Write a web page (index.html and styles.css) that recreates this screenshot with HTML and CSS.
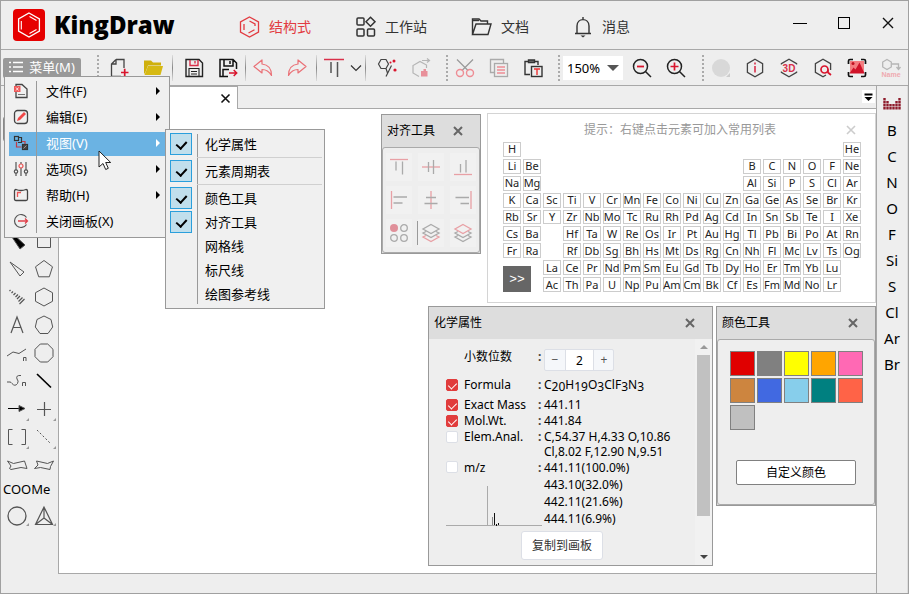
FILE: index.html
```html
<!DOCTYPE html>
<html lang="zh-CN">
<head>
<meta charset="utf-8">
<title>KingDraw</title>
<link rel="stylesheet" href="styles.css">
</head>
<body>
<header class="titlebar">
  <div class="brand">
    <svg width="32" height="32" viewBox="0 0 32 32" fill="none" stroke="#fff" stroke-width="1.300"><rect width="32" height="32" rx="4" fill="#e60000" stroke="none"/><path d="M16 4l10.400 6v12L16 28 5.600 22V10z"/><path d="M16.500 7.500l7 4M8.300 12v8.500M16.500 24.500l7-4" stroke-width="1.100"/></svg>
    <span class="brand-name">KingDraw</span>
  </div>
  <nav class="nav">
    <a href="#" class="nav-item active"><svg width="21" height="22" viewBox="0 0 21 22" fill="none" stroke="currentColor" stroke-width="1.300"><path d="M10.500 1l9 5v10l-9 5-9-5V6z"/><path d="M5 8v6M10.500 5l5.500 3v2M9.500 17l6-3.200"/></svg>结构式</a>
    <a href="#" class="nav-item"><svg width="21" height="22" viewBox="0 0 21 22" fill="none" stroke="currentColor" stroke-width="1.500"><rect x="2" y="2" width="7" height="7" rx="1"/><path d="M15.500 1.200l4.500 4.500-4.500 4.500L11 5.700z"/><rect x="2" y="13" width="7" height="7" rx="1"/><rect x="12.500" y="13" width="7" height="7" rx="1"/></svg>工作站</a>
    <a href="#" class="nav-item"><svg width="21" height="22" viewBox="0 0 21 22" fill="none" stroke="currentColor" stroke-width="1.400"><path d="M1.500 18.500V3H8l2 2h6.500v3M1.500 18.500L5 8h15l-3 10.500z"/><path d="M2 4.500h6"/></svg>文档</a>
    <a href="#" class="nav-item"><svg width="20" height="22" viewBox="0 0 20 22" fill="none" stroke="currentColor" stroke-width="1.400"><path d="M2 17.500h16M4 17.500V10c0-8.500 12-8.500 12 0v7.500M10 1v2.500"/><path d="M7.500 19.500h5l-2.500 2z" fill="currentColor" stroke="none"/></svg>消息</a>
  </nav>
  <div class="window-controls">
    <button aria-label="最小化"><svg width="14" height="14"><path d="M0 7.500h14" stroke="#000"/></svg></button>
    <button aria-label="最大化"><svg width="14" height="14"><rect x="1.500" y="1.500" width="11" height="11" fill="none" stroke="#000"/></svg></button>
    <button aria-label="关闭"><svg width="14" height="14"><path d="M2 2l10 10M12 2L2 12" stroke="#111" stroke-width="1.400"/></svg></button>
  </div>
</header>

<div class="toolbar">
  <div class="menu-root">
    <button class="menu-button"><svg width="14" height="12" viewBox="0 0 14 12" stroke="#fff" stroke-width="1.300"><path d="M0 1.500h2M4 1.500h10M0 6h2M4 6h10M0 10.500h2M4 10.500h10"/></svg>菜单(M)</button>
    <ul class="menu">
      <li class="menu-item"><svg class="mi" viewBox="0 0 16 16"><path d="M3 1.500h6l5 4.500v8.500H3z" fill="none" stroke="#444" stroke-width="1.300"/><path d="M5 11.500h7" stroke="#777"/><rect x="1" y="3" width="6.500" height="6" fill="#ee5a5a"/><path d="M3 4.500l2.500 3m0-3L3 7.500" stroke="#fff" stroke-width=".8"/></svg>文件(F)<i class="arrow"></i></li>
      <li class="menu-item"><svg class="mi" viewBox="0 0 16 16"><rect x="1.500" y="1.500" width="13" height="13" rx="3" fill="none" stroke="#444" stroke-width="1.300"/><path d="M4 12l1-3L11 3l2 2-6 6z" fill="#f04848"/></svg>编辑(E)<i class="arrow"></i></li>
      <li class="menu-item selected"><svg class="mi" viewBox="0 0 16 16" fill="none" stroke="#333" stroke-width="1.200"><rect x="1.500" y="1.500" width="4" height="4"/><path d="M6 2.500h2.500v5H5"/><path d="M3.500 7v5h5M9 6.500h3v3" stroke="#c13b45"/><rect x="9.500" y="9.500" width="5" height="5" fill="#444"/><path d="M10.500 13.500l3-3" stroke="#aaa" stroke-width=".8"/></svg>视图(V)<i class="arrow"></i>
        <ul class="submenu">
          <li><label><input type="checkbox" checked>化学属性</label></li>
          <li class="divider"></li>
          <li><label><input type="checkbox" checked>元素周期表</label></li>
          <li class="divider"></li>
          <li><label><input type="checkbox" checked>颜色工具</label></li>
          <li><label><input type="checkbox" checked>对齐工具</label></li>
          <li><label><input type="checkbox">网格线</label></li>
          <li><label><input type="checkbox">标尺线</label></li>
          <li><label><input type="checkbox">绘图参考线</label></li>
        </ul>
      </li>
      <li class="menu-item"><svg class="mi" viewBox="0 0 16 16" fill="none" stroke="#555" stroke-width="1.200"><path d="M3 1v8M3 12v3M8 1v2M8 7v8M13 1v8M13 12v3"/><circle cx="3" cy="10.500" r="1.700"/><circle cx="8" cy="5" r="2" stroke="#e55"/><circle cx="13" cy="10.500" r="1.700"/></svg>选项(S)<i class="arrow"></i></li>
      <li class="menu-item"><svg class="mi" viewBox="0 0 16 16" fill="none" stroke="#444" stroke-width="1.300"><path d="M1.500 4q0-1.500 1.500-1.500 5 2 10 0 1.500 0 1.500 1.500v8q0 1.500-1.500 1.500H3q-1.500 0-1.500-1.500z"/><path d="M4.500 10V5.500H8" stroke="#e55"/></svg>帮助(H)<i class="arrow"></i></li>
      <li class="menu-item"><svg class="mi" viewBox="0 0 16 16" fill="none" stroke="#555" stroke-width="1.200"><path d="M13.500 4.500a6.500 6.500 0 1 0 0 7"/><path d="M5 8h9.500M12 5.500L14.500 8 12 10.500" stroke="#e0404a" stroke-width="1.300"/></svg>关闭画板(X)</li>
    </ul>
  </div>
  <i class="grip"></i>
  <div class="group group-new">
    <button class="tool" aria-label="新建"><svg width="20" height="20" viewBox="0 0 20 20" fill="none" stroke="#444" stroke-width="1.300"><path d="M7 1.500h8V10M7 1.500L2.500 6v12.500H12M7 1.500V6H2.500"/><path d="M12 14.500h7.500M15.700 10.700v7.600" stroke="#d9152d" stroke-width="1.700"/></svg></button>
    <button class="tool" aria-label="打开"><svg width="21" height="20" viewBox="0 0 21 20"><path d="M1 2.500h7l2 2h8v3H5l-3 8H1z" fill="#cfb00c"/><path d="M5 8h15l-2.500 9H1.500z" fill="#d6b913"/></svg></button>
  </div>
  <i class="sep"></i>
  <div class="group">
    <button class="tool" aria-label="保存"><svg width="20" height="20" viewBox="0 0 20 20" fill="none" stroke="#222" stroke-width="1.400"><path d="M2 1.500h13l3.500 3.500v13.500h-16.500z"/><path d="M5 18v-7.500h10V18M7 13.500h6M7 16h6" stroke-width="1.100"/><path d="M6 2v5.500h8V2M11 3v2.500" stroke="#d9304a"/></svg></button>
    <button class="tool" aria-label="另存为"><svg width="20" height="20" viewBox="0 0 20 20" fill="none" stroke="#111" stroke-width="1.500"><path d="M18.500 11V5L15 1.500H2v17h8M6 2v6h9V2M12 3v3M5 18v-6.500h6"/><path d="M11 15h7.500M15.700 12l3 3-3 3" stroke="#d9152d"/></svg></button>
  </div>
  <i class="sep sep-tight"></i>
  <div class="group">
    <button class="tool" aria-label="撤销"><svg width="20" height="20" viewBox="0 0 20 20" fill="none" stroke="#ea7076" stroke-width="1.200"><path d="M1 8.500L9 2v4q9.500 1 9.500 11.500Q15 11.500 9 11.500V15z" stroke-linejoin="round"/></svg></button>
    <button class="tool" aria-label="重做"><svg width="20" height="20" viewBox="0 0 20 20" fill="none" stroke="#ea7076" stroke-width="1.200"><path d="M19 8.500L11 2v4Q1.500 7 1.500 17.500 5 11.500 11 11.500V15z" stroke-linejoin="round"/></svg></button>
  </div>
  <i class="sep sep-even"></i>
  <div class="group">
    <button class="tool tool-main" aria-label="对齐"><svg width="22" height="20" viewBox="0 0 22 20" fill="none" stroke="#555" stroke-width="1.500"><path d="M1 1.500h20" stroke="#d9304a"/><path d="M8 4v11M14.500 4v15"/></svg></button>
    <button class="tool tool-drop" aria-label="更多对齐"><svg width="12" height="8"><path d="M1 1.500l5 5 5-5" fill="none" stroke="#333" stroke-width="1.200"/></svg></button>
  </div>
  <i class="sep"></i>
  <div class="group">
    <button class="tool" aria-label="结构检查"><svg width="20" height="20" viewBox="0 0 20 20" fill="none" stroke="#444" stroke-width="1.200"><path d="M4 1.500h5l2.500 4.500L9 10.500H4L1.500 6zM9 10.500l1.500 4.500M14.500 7.500L9 18.500"/><g fill="#d9152d" stroke="none"><circle cx="17" cy="3" r="1.500"/><circle cx="13.500" cy="4.500" r="1"/><circle cx="18" cy="12" r="1.600"/></g></svg></button>
    <button class="tool" aria-label="结构优化"><svg width="20" height="20" viewBox="0 0 20 20" fill="none" stroke="#b5b5b5" stroke-width="1.200"><path d="M15.500 10V7L9 3.500 2 7.500v7.500l6 3.500M11 2.500h7.500M16 .5l2.500 2-2.500 2"/><path d="M10 18.500v-5.500h2.500V11H15v2h1.500v5.500z" fill="#e8909a" stroke="none"/></svg></button>
  </div>
  <i class="grip"></i>
  <div class="group">
    <button class="tool" aria-label="剪切"><svg width="20" height="20" viewBox="0 0 20 20" fill="none" stroke="#999" stroke-width="1.200"><path d="M2 1.500l11 11M18 1.500l-11 11"/><g stroke="#ee8d95" stroke-width="1.400"><circle cx="5" cy="15" r="3.500"/><circle cx="15" cy="15" r="3.500"/></g></svg></button>
    <button class="tool" aria-label="复制"><svg width="20" height="20" viewBox="0 0 20 20" fill="none" stroke="#aaa" stroke-width="1.300"><path d="M5 14.500H1.500v-13h13V5"/><rect x="5.500" y="5.500" width="13" height="13"/><path d="M8 9h8M8 12h8M8 15h8" stroke="#ee8d95"/></svg></button>
    <button class="tool" aria-label="粘贴"><svg width="20" height="20" viewBox="0 0 20 20" fill="none" stroke="#333" stroke-width="1.400"><path d="M7 16.500H2v-13h13V7"/><path d="M5.500 2h6v2.500h-6z" fill="#777"/><rect x="8.500" y="8.500" width="10.500" height="10"/><path d="M11 11h6M14 11v6" stroke="#e33"/></svg></button>
  </div>
  <i class="grip"></i>
  <div class="zoom"><select aria-label="缩放"><option>150%</option></select></div>
  <div class="group">
    <button class="tool" aria-label="缩小"><svg width="20" height="20" viewBox="0 0 20 20" fill="none" stroke="#222" stroke-width="1.500"><circle cx="8.500" cy="8.500" r="7"/><path d="M13.500 13.500l5.500 5.500"/><path d="M5 8.500h7" stroke="#d9152d" stroke-width="1.800"/></svg></button>
    <button class="tool" aria-label="放大"><svg width="20" height="20" viewBox="0 0 20 20" fill="none" stroke="#222" stroke-width="1.500"><circle cx="8.500" cy="8.500" r="7"/><path d="M13.500 13.500l5.500 5.500"/><path d="M4.500 8.500h8M8.500 4.500v8" stroke="#d9152d" stroke-width="1.700"/></svg></button>
  </div>
  <div class="group group-end">
    <i class="grip"></i>
    <button class="tool" aria-label="颜色"><svg width="20" height="20"><circle cx="10" cy="10" r="9" fill="#d8d8d8"/><path d="M19 15v4h-4z" fill="#ccc"/></svg></button>
    <button class="tool" aria-label="信息"><svg width="20" height="20" viewBox="0 0 20 20" fill="none" stroke="#444" stroke-width="1.300"><path d="M10 1.300l7.600 4.400v8.600L10 18.700l-7.600-4.400V5.700z"/><path d="M10 8v6.500M10 4.500v2" stroke="#d9304a" stroke-width="1.600"/></svg></button>
    <button class="tool" aria-label="三维"><svg width="20" height="20" viewBox="0 0 20 20" fill="none" stroke="#444" stroke-width="1.300"><path d="M2.400 6.500v-.8L10 1.300l7.600 4.400v.8M2.400 13.500v.8l7.600 4.400 7.600-4.400v-.8"/><text x="10" y="14" class="icon-3d" text-anchor="middle">3D</text></svg></button>
    <button class="tool" aria-label="搜索结构"><svg width="20" height="20" viewBox="0 0 20 20" fill="none" stroke="#444" stroke-width="1.300"><path d="M17.600 12V5.700L10 1.300 2.400 5.700v8.600L10 18.700l3-1.700"/><circle cx="11.500" cy="11.500" r="3.500" stroke="#d9152d" stroke-width="1.700"/><path d="M15 11.500v3l3 2.500" stroke="#d9152d" stroke-width="1.700"/></svg></button>
    <button class="tool" aria-label="图像识别"><svg width="20" height="20" viewBox="0 0 20 20"><rect x="3" y="3" width="14" height="12" fill="#f47d80"/><path d="M2.500 15.500l4-6 2 2 4-7 5 11z" fill="#d01228"/><circle cx="6" cy="5.500" r="1.500" fill="#c01020"/><path d="M1.500 6V3q0-1.500 1.500-1.500h3M14 1.500h3q1.500 0 1.500 1.500v3M18.500 14v3q0 1.500-1.500 1.500h-3M6 18.500H3q-1.500 0-1.500-1.500v-3" fill="none" stroke="#111" stroke-width="1.700"/></svg></button>
    <button class="tool" aria-label="命名"><svg width="20" height="20" viewBox="0 0 20 20" fill="none" stroke="#b5b5b5" stroke-width="1.300"><path d="M6 1.500l4.300 2.500v5L6 11.500 1.700 9V4zM11 6h6.500v4M15.500 9l2 2.500 2-2.500"/><text x="10" y="19" class="icon-name" text-anchor="middle">Name</text></svg></button>
  </div>
</div>

<main class="workspace">
  <aside class="tools">
    <button class="pick" aria-label="选择"></button>
    <div class="tool-grid">
      <button aria-label="实楔形键"><svg viewBox="0 0 20 20"><path d="M3 3l2-1 13 12-5 4z" fill="#000"/></svg></button>
      <button aria-label="四元环"><svg viewBox="0 0 20 20"><path d="M3.500 3.500h13v13h-13z"/></svg></button>
      <button aria-label="空楔形键"><svg viewBox="0 0 20 20"><path d="M3 3l14 10-4 4z"/></svg></button>
      <button aria-label="五元环"><svg viewBox="0 0 20 20"><path d="M10 1.500l8.500 6.300-3.200 10H4.700l-3.200-10z"/></svg></button>
      <button aria-label="虚楔形键"><svg viewBox="0 0 20 20"><path d="M2.500 4l1-1M4.500 6l1.500-1.500M6.500 8l2-2M8.500 10l2.500-2.500M10 12l3-3M11.500 14.500l4-4M12.500 17l5-5" stroke-width="1.200"/></svg></button>
      <button aria-label="六元环"><svg viewBox="0 0 20 20"><path d="M10 1l8.500 4.700v8.600L10 19l-8.500-4.700V5.700z"/></svg></button>
      <button aria-label="文字"><svg viewBox="0 0 20 20"><path d="M4 18l6-16 6 16M6 12.500h8" stroke-width="1.200"/></svg></button>
      <button aria-label="七元环"><svg viewBox="0 0 20 20"><path d="M10 1l7 3.500 1.700 7.500-4.700 6.500H6L1.300 12 3 4.500z"/></svg></button>
      <button aria-label="链"><svg viewBox="0 0 20 20"><path d="M0 13l6-4 6 1.500L19 6M16.500 18v-3.500h2.500V18"/></svg></button>
      <button aria-label="八元环"><svg viewBox="0 0 20 20"><path d="M6.300 1h7.400L19 6.300v7.400L13.700 19H6.300L1 13.700V6.300z"/></svg></button>
      <button aria-label="曲线"><svg viewBox="0 0 20 20"><path d="M0 11h3q1 0 2 1.500 3 3.500 5.500 0Q12 10 10 8q-1.500-4 4-3.500M15.500 15v-3.500h3V15"/></svg></button>
      <button aria-label="单键"><svg viewBox="0 0 20 20"><path d="M3 3l14 13.500" stroke="#000" stroke-width="1.700"/></svg></button>
      <button aria-label="箭头"><svg viewBox="0 0 20 20"><path d="M1 9.500h12" stroke="#000"/><path d="M12 6.500l6 3-6 3z" fill="#000"/><path class="corner" d="M22 19v3h-3z"/></svg></button>
      <button aria-label="加号"><svg viewBox="0 0 20 20"><path d="M3 10.500h14M10.500 3v14" stroke-width="1.200"/><path class="corner" d="M22 19v3h-3z"/></svg></button>
      <button aria-label="括号"><svg viewBox="0 0 20 20"><path d="M5.500 2.500h-4v15h4M14.500 2.500h4v15h-4"/><path class="corner" d="M22 19v3h-3z"/></svg></button>
      <button aria-label="虚线"><svg viewBox="0 0 20 20"><path d="M3 3l14 14" stroke-dasharray="2 2"/><path class="corner" d="M22 19v3h-3z"/></svg></button>
      <button aria-label="船式"><svg viewBox="0 0 20 20"><path d="M.5 6l6 2.500 11-2.500 2.500 7.500-6-1L4 14.500l-1.500-1L4 11z"/></svg></button>
      <button aria-label="椅式"><svg viewBox="0 0 20 20"><path d="M19.500 6l-6 2.500-11-2.500L4 10 .5 13.500l6-1 9.500 2 .5-3z"/></svg></button>
    </div>
    <button class="label-tool">COOMe</button>
    <div class="tool-grid">
      <button aria-label="圆"><svg viewBox="0 0 20 20"><circle cx="10" cy="10" r="9" stroke-width="1.300"/><path class="corner" d="M22 17v3h-3z"/></svg></button>
      <button aria-label="四面体"><svg viewBox="0 0 20 20"><path d="M10 1L1.500 18.500h17zM10 1v11L1.500 18.500M10 12l8.500 6.500" stroke-width="1.200"/><path class="corner" d="M22 17v3h-3z"/></svg></button>
    </div>
  </aside>

  <section class="document">
    <div class="tabs">
      <div class="tab"><button aria-label="关闭标签"><svg width="9" height="9"><path d="M.5.5l8 8M8.500.5l-8 8" stroke="#111" stroke-width="1.600"/></svg></button></div>
      <button class="tab-list" aria-label="标签列表"><svg width="13" height="13"><path d="M2.500 4.500h8" stroke="#000" stroke-width="2"/><path d="M2.500 7h8l-4 4z"/></svg></button>
    </div>
    <div class="canvas">
      <section class="panel align-panel">
        <header class="panel-head">对齐工具<button aria-label="关闭"><svg width="10" height="10"><path d="M1 1l8 8M9 1L1 9"/></svg></button></header>
        <div class="panel-body align-grid">
          <button aria-label="顶对齐"><svg viewBox="0 0 20 20"><path class="r" d="M1 2.500h18"/><path d="M7 4.500v9M13.500 4.500v13"/></svg></button>
          <button aria-label="垂直居中"><svg viewBox="0 0 20 20"><path class="r" d="M1 10h18"/><path d="M7.500 5v10M12.500 3v14"/></svg></button>
          <button aria-label="底对齐"><svg viewBox="0 0 20 20"><path class="r" d="M1 17.500h18"/><path d="M7.500 7v8.500M13 3v12.500"/></svg></button>
          <button aria-label="左对齐"><svg viewBox="0 0 20 20"><path class="r" d="M2.500 1v18"/><path d="M4.500 7H18M4.500 13h9"/></svg></button>
          <button aria-label="水平居中"><svg viewBox="0 0 20 20"><path class="r" d="M10 1v18"/><path d="M5 7.500h10M3.500 13.500h13"/></svg></button>
          <button aria-label="右对齐"><svg viewBox="0 0 20 20"><path class="r" d="M18 1v18"/><path d="M2.500 7.500H16M7.500 13.500H16"/></svg></button>
          <button aria-label="分组"><svg viewBox="0 0 20 20"><circle cx="5" cy="5" r="4" fill="#e0909a" stroke="none"/><circle cx="15" cy="5" r="3.300"/><circle cx="5" cy="15" r="3.300"/><circle cx="15" cy="15" r="3.300"/></svg></button>
          <button class="ruled" aria-label="置于底层"><svg viewBox="0 0 20 20"><path d="M10 1.500l8 4.500-8 4.500L2 6zM5 8.500L2 10l8 4.500 8-4.500-3-1.500"/><path class="r" d="M5 12.500L2 14l8 4.500 8-4.500-3-1.500"/></svg></button>
          <button aria-label="置于顶层"><svg viewBox="0 0 20 20"><path d="M5 8.500L2 10l8 4.500 8-4.500-3-1.500M5 12.500L2 14l8 4.500 8-4.500-3-1.500"/><path class="r" d="M10 1.500l8 4.500-8 4.500L2 6z"/></svg></button>
        </div>
      </section>

      <section class="ptable">
        <header class="ptable-head">提示：右键点击元素可加入常用列表<button aria-label="关闭"><svg width="10" height="10"><path d="M1 1l8 8M9 1L1 9" stroke="#ccc" stroke-width="1.600"/></svg></button></header>
        <div class="elements" id="elements"><button class="more">&gt;&gt;</button></div>
      </section>

      <section class="panel props-panel">
        <header class="panel-head">化学属性<button aria-label="关闭"><svg width="10" height="10"><path d="M1 1l8 8M9 1L1 9"/></svg></button></header>
        <div class="props-scroll">
          <div class="props">
            <div class="prop prop-digits"><label for="digits">小数位数</label><b>:</b>
              <div class="stepper"><button aria-label="减少">−</button><input id="digits" value="2"><button aria-label="增加">+</button></div></div>
            <div class="prop prop-formula"><input type="checkbox" id="p1" checked><label for="p1">Formula</label><b>:</b><span>C<sub>20</sub>H<sub>19</sub>O<sub>3</sub>ClF<sub>3</sub>N<sub>3</sub></span></div>
            <div class="prop"><input type="checkbox" id="p2" checked><label for="p2">Exact Mass</label><b>:</b><span>441.11</span></div>
            <div class="prop"><input type="checkbox" id="p3" checked><label for="p3">Mol.Wt.</label><b>:</b><span>441.84</span></div>
            <div class="prop prop-anal"><input type="checkbox" id="p4"><label for="p4">Elem.Anal.</label><b>:</b><span>C,54.37 H,4.33 O,10.86<br>Cl,8.02 F,12.90 N,9.51</span></div>
            <div class="prop prop-mz"><input type="checkbox" id="p5"><label for="p5">m/z</label><b>:</b><span>441.11(100.0%)<br>443.10(32.0%)<br>442.11(21.6%)<br>444.11(6.9%)</span>
              <svg class="spectrum" width="96" height="42"><path d="M0 40.500h96M41.500 1v39" stroke="#aaa" fill="none"/><path d="M46.500 32v8" stroke="#888"/><path d="M48.500 28v12M50.500 39v2M52.500 38v2" stroke="#111"/></svg></div>
            <button class="copy">复制到画板</button>
          </div>
          <div class="scrollbar"><i class="up"></i><i class="thumb"></i><i class="down"></i></div>
        </div>
      </section>

      <section class="panel color-panel">
        <header class="panel-head">颜色工具<button aria-label="关闭"><svg width="10" height="10"><path d="M1 1l8 8M9 1L1 9"/></svg></button></header>
        <div class="panel-body colors">
          <div class="swatches">
            <button class="c1" aria-label="红"></button><button class="c2" aria-label="灰"></button><button class="c3" aria-label="黄"></button><button class="c4" aria-label="橙"></button><button class="c5" aria-label="粉"></button>
            <button class="c6" aria-label="棕"></button><button class="c7" aria-label="蓝"></button><button class="c8" aria-label="天蓝"></button><button class="c9" aria-label="青"></button><button class="c10" aria-label="番茄红"></button>
            <button class="c11" aria-label="浅灰"></button>
          </div>
          <button class="custom">自定义颜色</button>
        </div>
      </section>
    </div>
    <footer class="status"></footer>
  </section>

  <aside class="atoms">
    <button aria-label="周期表"><svg width="18" height="14" viewBox="0 0 18 14"><path d="M1.500 1v12M4.500 4v9M7.500 7v6M10.500 7v6M13.500 4v9M16.500 1v12" stroke="#8e1b2b" stroke-width="2.400" stroke-dasharray="2.500 .5" fill="none"/></svg></button>
    <button>B</button><button>C</button><button>N</button><button>O</button><button>F</button><button>Si</button><button>S</button><button>Cl</button><button>Ar</button><button>Br</button>
  </aside>
</main>
<svg class="cursor" width="14" height="21" viewBox="0 0 14 21"><path d="M1 1v16l4-3.500 2.700 6 2.600-1.200L7.700 12.500h5z" fill="#fff" stroke="#222"/></svg>
<script src="script.js"></script>
</body>
</html>
```
FILE: styles.css
```css
* { box-sizing: border-box; }
body {
  margin: 0;
  height: 100vh;
  display: flex;
  flex-direction: column;
  overflow: hidden;
  border: 1px solid #a0a0a0;
  background: #eee;
  color: #111;
  font: 13px/16px "Noto Sans", "Noto Sans CJK SC", sans-serif;
}
button, input, select { font: inherit; color: inherit; margin: 0; }
button { border: 0; padding: 0; background: none; display: flex; align-items: center; justify-content: center; }
ul { list-style: none; margin: 0; padding: 0; }
svg { display: block; flex: none; overflow: visible; }

/* title bar */
.titlebar { display: flex; align-items: center; height: 49px; padding-left: 12px; border-bottom: 1px solid #a8a8a8; }
.brand { display: flex; align-items: center; gap: 9px; width: 226px; }
.brand-name { font: 800 24px/32px "Open Sans", sans-serif; color: #000; }
.nav { display: flex; gap: 44px; flex: 1; padding-top: 3px; }
.nav-item { display: flex; align-items: center; gap: 9px; color: #333; font-size: 14px; text-decoration: none; }
.nav-item.active { color: #e23b41; }
.window-controls { display: flex; gap: 4px; align-self: flex-start; }
.window-controls button { width: 40px; height: 44px; }

/* toolbar */
.toolbar { display: flex; align-items: center; height: 36px; padding-left: 2px; border-bottom: 1px solid #a8a8a8; }
.menu-root { position: relative; margin-right: 8px; }
.menu-button { gap: 6px; width: 78px; height: 20px; padding-bottom: 2px; background: #999; color: #fff; border-radius: 2px; }
.group { display: flex; }
.group-end { margin-left: auto; align-items: center; }
.tool { width: 34px; height: 34px; }
.tool-main { width: 30px; }
.tool-drop { width: 14px; }
.sep { width: 1px; height: 26px; margin: 0 4px 0 2px; background: linear-gradient(#ddd, #888, #ddd); }
.sep-tight { margin: 0; }
.sep-even { margin: 0 2px; }
.grip { width: 2px; height: 26px; margin-left: 8px; background: repeating-linear-gradient(#aaa 0 2px, transparent 2px 4px); }
.group-new { margin-left: 3px; }
.icon-3d { font: 700 10px "Liberation Sans", sans-serif; fill: #d9304a; stroke: none; }
.icon-name { font: 700 7px "Liberation Sans", sans-serif; fill: #eeaab0; stroke: none; }
.zoom { position: relative; margin: 0 2px 0 3px; }
.zoom select { appearance: none; width: 60px; height: 24px; padding: 0 4px; border: 0; border-radius: 0; background: #fff; color: #000; }
.zoom::after { content: ""; position: absolute; right: 4px; top: 9px; border: 6px solid transparent; border-top-color: #555; border-bottom: 0; pointer-events: none; }

/* menus */
.menu { position: absolute; z-index: 10; left: 1px; top: 18px; width: 166px; padding: 3px 4px; display: flex; flex-direction: column; gap: 2px; border: 1px solid #999; background: linear-gradient(#999, #999) 31px 4px / 1px 152px no-repeat #f0f0f0; }
.menu-item { position: relative; display: flex; align-items: center; height: 24px; padding-left: 4px; padding-bottom: 1px; color: #000; }
.menu-item.selected { background: linear-gradient(#999, #999) 27px 0 / 1px 24px no-repeat #6bb3e3; color: #fff; }
.mi { width: 16px; height: 16px; margin-right: 17px; }
.arrow { margin-left: auto; margin-right: 5px; border: 4px solid transparent; border-left-color: currentColor; border-right: 0; }
.submenu { position: absolute; left: 156px; top: -3px; width: 160px; padding: 2px; border: 1px solid #999; background: linear-gradient(#999, #999) 31px 4px / 1px 170px no-repeat #f0f0f0; color: #000; }
.submenu label { display: flex; align-items: center; gap: 13px; height: 24px; padding-left: 2px; }
.submenu input { appearance: none; width: 22px; height: 22px; display: grid; place-items: center; }
.submenu input:checked { border: 1px solid #2a9fdc; background: #c1dfec; }
.submenu input:checked::after { content: ""; width: 5px; height: 8px; border: solid #000; border-width: 0 2px 2px 0; transform: rotate(42deg); }
.divider { height: 1px; margin: 1px 0 1px 29px; background: #d0d0d0; }
.cursor { position: absolute; z-index: 20; left: 98px; top: 150px; }

/* workspace */
.workspace { flex: 1; min-height: 0; display: grid; grid-template-columns: 57px 1fr 32px; }
.tools { padding: 30px 1px 0 2px; }
.pick { width: 27px; height: 26px; margin-bottom: 85px; border: 1px solid #888; border-radius: 3px; }
.tool-grid { display: grid; grid-template-columns: 27px 27px; }
.tool-grid button { height: 28px; }
.tool-grid svg { width: 20px; height: 20px; fill: none; stroke: #555; }
.tool-grid .corner { fill: #999; stroke: none; }
.label-tool { height: 20px; margin-bottom: 3px; color: #000; }
.document { display: flex; flex-direction: column; min-width: 0; }
.tabs { display: flex; justify-content: space-between; align-items: flex-start; height: 23px; border: solid #a8a8a8; border-width: 0 0 1px 1px; }
.tab { width: 179px; height: 23px; padding: 5px 7px; display: flex; justify-content: flex-end; background: #fff; border: solid #a8a8a8; border-width: 1px 1px 0 0; }
.tab-list { margin: 4px 1px; background: #fff; }
.canvas { position: relative; flex: 1; background: #fff; border: solid #a8a8a8; border-width: 0 0 1px 1px; }
.status { height: 19px; }
.atoms { display: flex; flex-direction: column; align-items: center; padding-top: 5px; border-left: 1px solid #a8a8a8; border-right: 1px solid #ddd; font-size: 15px; color: #000; }
.atoms button { height: 26px; }

/* floating panels */
.panel { position: absolute; display: flex; flex-direction: column; border: 1px solid #999; background: #ddd; font-size: 12px; }
.panel-head { display: flex; align-items: center; justify-content: space-between; height: 32px; padding: 0 17px 0 5px; color: #000; }
.panel-head svg { stroke: #666; stroke-width: 2; }
.panel-body { flex: 1; border: 1px solid #aaa; border-radius: 3px; background: #eee; }
.align-panel { right: 395px; top: 5px; width: 100px; height: 140px; }
.align-grid { display: grid; grid-template-columns: repeat(3, 26px); grid-auto-rows: 28px; gap: 5px 6px; place-content: center; }
.align-grid button { background: #f1f1f1; }
.align-grid svg { width: 20px; height: 20px; fill: none; stroke: #aaa; stroke-width: 1.3; }
.align-grid .r { stroke: #e8a0a5; }
.align-grid .ruled { box-shadow: -3px 0 0 -2px #999; }

.ptable { position: absolute; right: 0; top: 4px; width: 389px; padding: 0 15px 10px; border: 1px solid #d4d4d4; background: #fff; font-size: 12px; }
.ptable-head { display: flex; justify-content: space-between; align-items: center; height: 28px; padding: 3px 4px 0 81px; color: #999; }
.elements { display: grid; grid-template-columns: repeat(18, 18px); grid-template-rows: repeat(9, 1fr); gap: 2px; height: 150px; font-size: 11px; }
.elements button { min-width: 0; min-height: 0; line-height: 12px; border: 1px solid #ccc; background: #fff; color: #222; }
.elements .more { grid-area: 8 / 1 / 10 / 3; width: 28px; height: 26px; border: 0; background: #666; color: #fff; align-self: end; font: 13px "Liberation Mono", monospace; }

.props-panel { right: 163px; top: 197px; width: 285px; height: 260px; }
.props-scroll { flex: 1; display: flex; background: #eee; }
.props { flex: 1; padding: 10px 0 0 17px; color: #000; }
.prop { display: grid; grid-template-columns: 18px 74px 6px 1fr; align-items: start; line-height: 16px; }
.prop b { color: #444; }
.prop label { grid-column: 2; }
.prop input[type="checkbox"] { appearance: none; width: 12px; height: 12px; margin-top: 2px; display: grid; place-items: center; border: 1px solid #dcdfe6; border-radius: 2px; background: #fff; }
.prop input[type="checkbox"]:checked { border-color: #e13c3c; background: #e13c3c; }
.prop input[type="checkbox"]:checked::after { content: ""; width: 4px; height: 7px; border: solid #fff; border-width: 0 1px 1px 0; transform: rotate(45deg); }
.prop-digits { height: 28px; }
.stepper { display: grid; grid-template-columns: 20px 29px 20px; width: 70px; height: 22px; border: 1px solid #dcdfe6; border-radius: 2px; background: #f5f7fa; }
.stepper button { color: #555; }
.stepper input { width: 29px; height: 20px; padding: 0; border: solid #dcdfe6; border-width: 0 1px; background: #fff; text-align: center; }
.prop-formula { height: 20px; }
.prop sub { font-size: 12px; line-height: 0; vertical-align: -2px; }
.prop-anal { line-height: 15px; }
.prop-mz { position: relative; line-height: 17px; }
.spectrum { position: absolute; left: 0; bottom: 0; }
.copy { width: 82px; height: 29px; margin: 4px 0 0 75px; border: 1px solid #dcdfe6; border-radius: 3px; background: #fff; color: #333; }
.scrollbar { width: 17px; display: flex; flex-direction: column; align-items: center; padding: 6px 0; background: #f1f1f1; }
.up { border: 4px solid transparent; border-bottom-color: #999; border-top: 0; }
.thumb { width: 13px; height: 161px; margin: 6px 0 auto; background: #c1c1c1; }
.down { border: 4px solid transparent; border-top-color: #444; border-bottom: 0; }

.color-panel { right: 0; top: 197px; width: 160px; height: 200px; }
.colors { display: flex; flex-direction: column; align-items: center; padding-top: 11px; }
.swatches { display: grid; grid-template-columns: repeat(5, 25px); gap: 2px; }
.swatches button { height: 25px; border: 1px solid #808080; }
.c1 { background: #e00000; } .c2 { background: #808080; } .c3 { background: #ffff00; } .c4 { background: #ffa500; }
.c5 { background: #ff69b4; } .c6 { background: #cd853f; } .c7 { background: #4169e1; } .c8 { background: #87ceeb; }
.c9 { background: #008080; } .c10 { background: #ff6347; } .c11 { background: #c0c0c0; }
.custom { width: 120px; height: 25px; margin-top: 30px; border: 1px solid #808080; border-radius: 2px; background: #fff; color: #000; }
```
FILE: script.js
```js
const rows = [
  "H . . . . . . . . . . . . . . . . He",
  "Li Be . . . . . . . . . . B C N O F Ne",
  "Na Mg . . . . . . . . . . Al Si P S Cl Ar",
  "K Ca Sc Ti V Cr Mn Fe Co Ni Cu Zn Ga Ge As Se Br Kr",
  "Rb Sr Y Zr Nb Mo Tc Ru Rh Pd Ag Cd In Sn Sb Te I Xe",
  "Cs Ba . Hf Ta W Re Os Ir Pt Au Hg Tl Pb Bi Po At Rn",
  "Fr Ra . Rf Db Sg Bh Hs Mt Ds Rg Cn Nh Fl Mc Lv Ts Og",
  ". . La Ce Pr Nd Pm Sm Eu Gd Tb Dy Ho Er Tm Yb Lu .",
  ". . Ac Th Pa U Np Pu Am Cm Bk Cf Es Fm Md No Lr ."
];
const table = document.getElementById("elements");
rows.forEach((row, r) => row.split(" ").forEach((symbol, c) => {
  if (symbol === ".") return;
  const cell = document.createElement("button");
  cell.textContent = symbol;
  cell.style.gridArea = `${r + 1} / ${c + 1}`;
  table.append(cell);
}));
```
